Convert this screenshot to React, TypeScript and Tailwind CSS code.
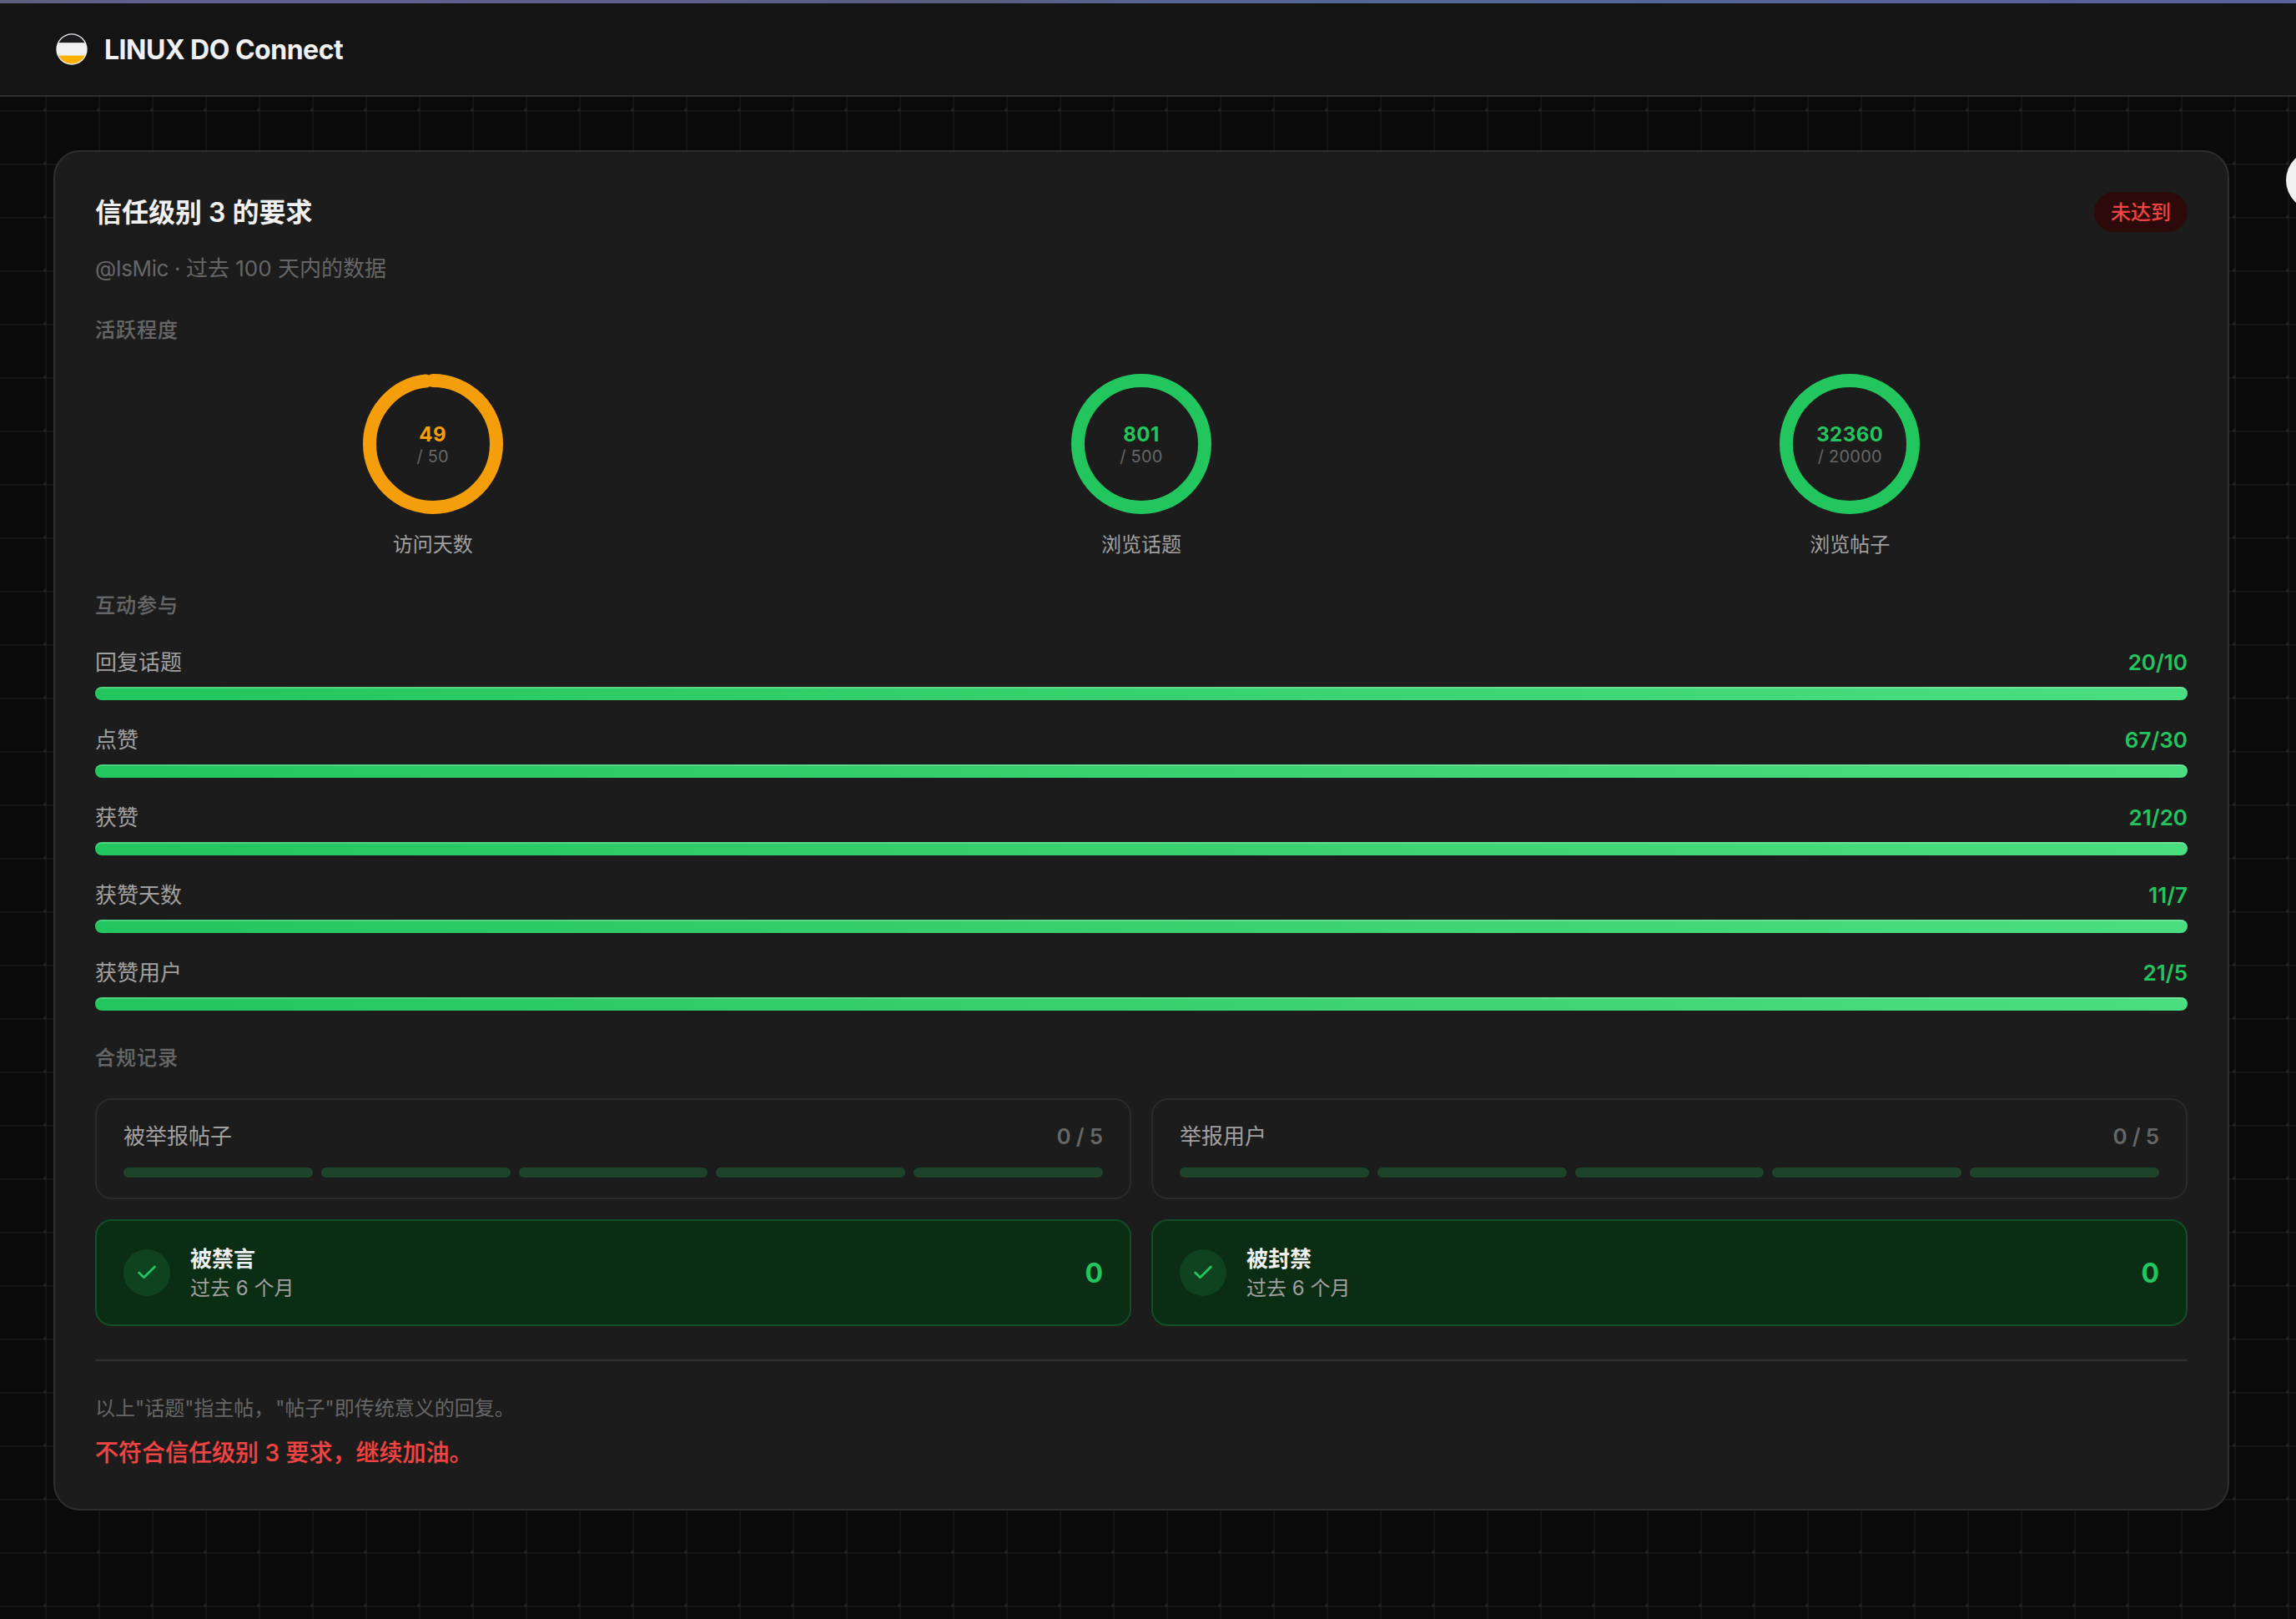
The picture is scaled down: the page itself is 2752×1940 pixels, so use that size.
import React from "react";

type Ring = { value: number; target: number; label: string; done: boolean };

const rings: Ring[] = [
  { value: 49, target: 50, label: "访问天数", done: false },
  { value: 801, target: 500, label: "浏览话题", done: true },
  { value: 32360, target: 20000, label: "浏览帖子", done: true },
];

const bars = [
  { label: "回复话题", value: "20/10" },
  { label: "点赞", value: "67/30" },
  { label: "获赞", value: "21/20" },
  { label: "获赞天数", value: "11/7" },
  { label: "获赞用户", value: "21/5" },
];

function Logo() {
  return (
    <svg viewBox="0 0 120 120" className="size-[38px] shrink-0">
      <clipPath id="logo-disc">
        <circle cx="60" cy="60" r="55" />
      </clipPath>
      <circle cx="60" cy="60" r="59" fill="#f0f0f0" />
      <g clipPath="url(#logo-disc)">
        <rect x="0" y="0" width="120" height="36" fill="#1c1c1e" />
        <rect x="0" y="36" width="120" height="48" fill="#f0f0f0" />
        <rect x="0" y="84" width="120" height="36" fill="#ffb003" />
      </g>
    </svg>
  );
}

function SectionLabel({ children, className }: { children: React.ReactNode; className: string }) {
  return (
    <h2
      className={`h-9 text-[24px] font-medium tracking-[1px] text-[#666666] [-webkit-text-stroke:0.2px_#666666] ${className}`}
    >
      {children}
    </h2>
  );
}

function RingStat({ value, target, label, done }: Ring) {
  const circumference = 2 * Math.PI * 76;
  const ratio = Math.min(value / target, 1);
  return (
    <div className="flex flex-col items-center">
      <div className="grid size-[168px] place-items-center">
        <svg viewBox="0 0 168 168" className="col-start-1 row-start-1 size-[168px] -rotate-90">
          <circle
            cx="84"
            cy="84"
            r="76"
            fill="none"
            strokeWidth="16"
            strokeLinecap="round"
            stroke={done ? "#22c55e" : "#f59e0b"}
            strokeDasharray={ratio === 1 ? undefined : `${circumference * ratio} ${circumference}`}
          />
        </svg>
        <div className="col-start-1 row-start-1 flex flex-col items-center pt-1">
          <span
            className={`h-[26px] text-[24px] leading-[26px] font-bold tracking-[0.5px] ${done ? "text-[#22c55e]" : "text-[#f59e0b]"}`}
          >
            {value}
          </span>
          <span className="h-[26px] text-[20px] leading-[26px] tracking-[0.2px] text-[#666666]">/ {target}</span>
        </div>
      </div>
      <div className="mt-[19px] h-[35px] text-[24px] leading-9 text-[#a0a0a0]">{label}</div>
    </div>
  );
}

function BarStat({ label, value }: { label: string; value: string }) {
  return (
    <div>
      <div className="flex h-10 items-center justify-between text-[26px] leading-10">
        <span className="pt-px text-[#a0a0a0]">{label}</span>
        <span className="pt-0.5 font-semibold text-[#22c55e]">{value}</span>
      </div>
      <div className="mt-[10px] h-4 rounded-full bg-linear-to-r from-[#22c55e] to-[#4ade80] shadow-[inset_0_2px_0_rgba(255,255,255,0.2)]" />
    </div>
  );
}

function SegmentCard({ label }: { label: string }) {
  return (
    <div className="h-[121px] rounded-[20px] border-2 border-[#2a2a2a] px-8 pt-[25px]">
      <div className="flex h-9 items-center justify-between text-[26px] leading-9">
        <span className="pt-px text-[#a0a0a0]">{label}</span>
        <span className="pt-0.5 font-semibold tracking-[-0.2px] text-[#666666]">0 / 5</span>
      </div>
      <div className="mt-5 flex gap-[10px]">
        {[0, 1, 2, 3, 4].map((i) => (
          <div key={i} className="h-3 flex-1 rounded-full bg-[#1e432b]" />
        ))}
      </div>
    </div>
  );
}

function PassCard({ title }: { title: string }) {
  return (
    <div className="flex h-32 items-center rounded-[20px] border-2 border-[#124e26] bg-[#0a2d14] px-8">
      <div className="flex size-14 items-center justify-center rounded-full bg-[#0f421f]">
        <svg
          viewBox="0 0 24 24"
          className="size-7"
          fill="none"
          stroke="#22c55e"
          strokeWidth="2.4"
          strokeLinecap="round"
          strokeLinejoin="round"
        >
          <path d="M20 6 9 17l-5-5" />
        </svg>
      </div>
      <div className="ml-6 flex-1 pt-px">
        <div className="h-9 text-[26px] leading-9 font-semibold text-[#f0f0f0]">{title}</div>
        <div className="h-[34px] text-[24px] leading-[34px] text-[#a0a0a0]">过去 6 个月</div>
      </div>
      <div className="pt-0.5 text-[32px] leading-10 font-bold text-[#22c55e]">0</div>
    </div>
  );
}

export default function App() {
  return (
    <div className="relative h-[1940px] w-[2752px] overflow-hidden bg-[#0a0a0a] font-['Inter','Noto_Sans_CJK_SC',sans-serif] text-[#f0f0f0]">
      {/* background grid: hairlines plus a dot on each crossing */}
      <svg className="absolute inset-0 h-full w-full">
        <defs>
          <pattern id="grid" x="22" y="100" width="64" height="64" patternUnits="userSpaceOnUse">
            <rect x="32" y="0" width="2" height="64" fill="#151515" />
            <rect x="0" y="32" width="64" height="2" fill="#151515" />
            <circle cx="32" cy="32" r="2" fill="#242424" />
          </pattern>
        </defs>
        <rect width="100%" height="100%" fill="url(#grid)" />
      </svg>

      <div className="relative">
        <div className="h-1 bg-[linear-gradient(90deg,#5c5f7c_0%,#625f92_8%,#5b608c_24%,#575f80_43%,#566493_50%,#566795_64%,#56619a_90%,#586499_100%)]" />
        <header className="flex h-28 items-center border-b-2 border-[#2e2e2e] bg-[#141414] pl-[67px]">
          <Logo />
          <span className="ml-5 pt-0.5 text-[32px] leading-10 font-bold tracking-[-0.5px]">LINUX DO Connect</span>
        </header>

        <main className="mt-16 ml-16 h-[1630px] w-[2608px] rounded-[32px] border-2 border-[#2e2e2e] bg-[#1c1c1c] p-12">
          <div className="flex h-12 items-center justify-between">
            <h1 className="pt-0.5 text-[32px] leading-[48px] font-semibold">信任级别 3 的要求</h1>
            <span className="flex h-12 w-28 items-center justify-center rounded-full bg-[#2d0a0a] pt-0.5 text-[24px] font-medium text-[#ef4444]">
              未达到
            </span>
          </div>
          <p className="mt-[22px] h-[42px] text-[26px] leading-[43px] text-[#666666]">
            <span className="tracking-[-0.4px]">@IsMic · </span>过去 100 天内的数据
          </p>

          <SectionLabel className="mt-9 leading-[35px]">活跃程度</SectionLabel>
          <div className="mt-[34px] grid grid-cols-3 gap-10">
            {rings.map((r) => (
              <RingStat key={r.label} {...r} />
            ))}
          </div>

          <SectionLabel className="mt-[37px] leading-[37px]">互动参与</SectionLabel>
          <div className="mt-[30px] flex flex-col gap-[27px]">
            {bars.map((b) => (
              <BarStat key={b.label} {...b} />
            ))}
          </div>

          <SectionLabel className="mt-[39px] leading-[35px]">合规记录</SectionLabel>
          <div className="mt-[30px] grid grid-cols-2 gap-6">
            <SegmentCard label="被举报帖子" />
            <SegmentCard label="举报用户" />
            <PassCard title="被禁言" />
            <PassCard title="被封禁" />
          </div>

          <div className="mt-10 h-0.5 bg-[#2e2e2e]" />
          <p className="mt-[39px] h-9 text-[24px] leading-9 text-[#666666]">
            以上"话题"指主帖，<span className="ml-0.5">"帖子"即传统意义的回复。</span>
          </p>
          <p className="mt-[14px] h-10 text-[28px] leading-[42px] font-medium text-[#ef4444] [-webkit-text-stroke:0.2px_#ef4444]">
            不符合信任级别 3 要求，继续加油。
          </p>
        </main>
      </div>

      {/* floating button peeking in from the right edge */}
      <div className="absolute top-[180px] left-[2740px] size-[72px] rounded-full bg-[#f0f0f0]" />
    </div>
  );
}
